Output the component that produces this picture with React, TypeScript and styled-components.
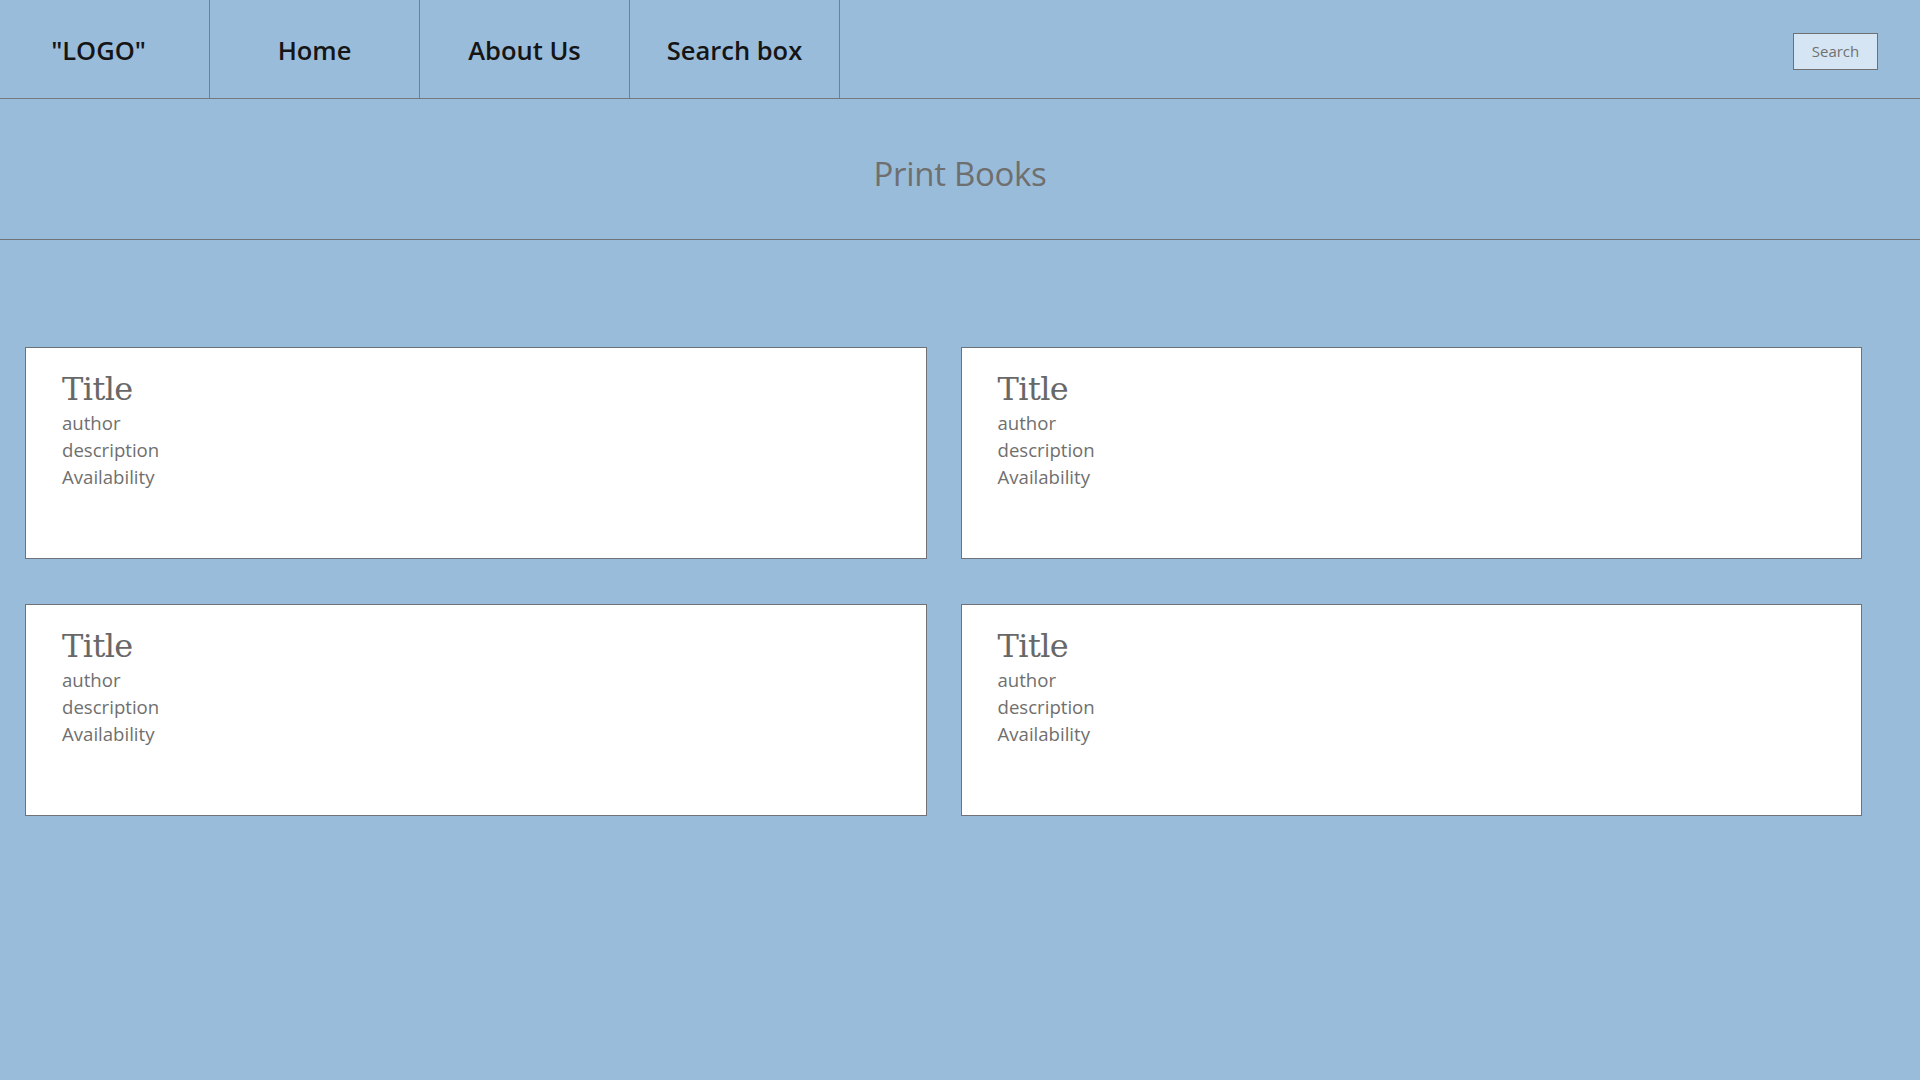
import React from "react";
import styled, { createGlobalStyle } from "styled-components";

const GlobalStyle = createGlobalStyle`
  html, body {
    margin: 0;
    padding: 0;
    background: #9abcdb;
    min-height: 100%;
  }
  body {
    font-family: "Open Sans", "Noto Sans", sans-serif;
  }
  * { box-sizing: border-box; }
`;

const Page = styled.div`
  min-height: 100vh;
  background: #9abcdb;
  display: flex;
  flex-direction: column;
`;

const NavBar = styled.nav`
  height: 99px;
  display: flex;
  align-items: stretch;
  border-bottom: 1px solid #74797f;
  padding-right: 42px;
`;

const NavItem = styled.a<{ $logo?: boolean }>`
  width: 210px;
  display: flex;
  align-items: center;
  justify-content: center;
  border-right: 1px solid #7a7e84;
  color: #151515;
  font-family: "Open Sans", "Noto Sans", sans-serif;
  font-size: 25.5px;
  font-weight: 600;
  text-decoration: none;
  padding-top: 2px;
  padding-right: ${(p) => (p.$logo ? "12px" : "0")};
`;

const Spacer = styled.div`
  flex: 1;
`;

const SearchButton = styled.button`
  align-self: center;
  margin-top: 4px;
  width: 85px;
  height: 37px;
  background: #d5e5f4;
  border: 1px solid #707070;
  color: #717171;
  font-family: "Open Sans", "Noto Sans", sans-serif;
  font-size: 15px;
  padding: 0;
  cursor: pointer;
`;

const Header = styled.header`
  height: 141px;
  display: flex;
  align-items: center;
  justify-content: center;
  border-bottom: 1px solid #6f7378;
  padding-top: 8px;
`;

const PageTitle = styled.h1`
  margin: 0;
  font-family: "Open Sans", "Noto Sans", sans-serif;
  font-weight: 400;
  font-size: 33px;
  color: #6f6f6f;
  letter-spacing: -0.3px;
`;

const Grid = styled.section`
  display: grid;
  grid-template-columns: repeat(2, 1fr);
  column-gap: 34px;
  row-gap: 45px;
  padding: 107px 58px 0 25px;
`;

const Card = styled.article`
  height: 212px;
  background: #ffffff;
  border: 1px solid #6f7378;
  padding: 22px 36px 0;
  display: flex;
  flex-direction: column;
`;

const CardTitle = styled.h2`
  margin: 0 0 1px;
  font-family: "DejaVu Serif", "Liberation Serif", serif;
  font-weight: 400;
  font-size: 32px;
  line-height: 38px;
  color: #686868;
  letter-spacing: -0.6px;
`;

const CardLine = styled.div`
  font-family: "Open Sans", "Noto Sans", sans-serif;
  font-size: 18.6px;
  line-height: 27px;
  color: #6f6f6f;
`;

const books = [0, 1, 2, 3];

export default function App() {
  return (
    <>
      <GlobalStyle />
      <Page>
        <NavBar>
          <NavItem href="#" $logo>"LOGO"</NavItem>
          <NavItem href="#">Home</NavItem>
          <NavItem href="#">About Us</NavItem>
          <NavItem href="#">Search box</NavItem>
          <Spacer />
          <SearchButton>Search</SearchButton>
        </NavBar>
        <Header>
          <PageTitle>Print Books</PageTitle>
        </Header>
        <Grid>
          {books.map((b) => (
            <Card key={b}>
              <CardTitle>Title</CardTitle>
              <CardLine>author</CardLine>
              <CardLine>description</CardLine>
              <CardLine>Availability</CardLine>
            </Card>
          ))}
        </Grid>
      </Page>
    </>
  );
}
